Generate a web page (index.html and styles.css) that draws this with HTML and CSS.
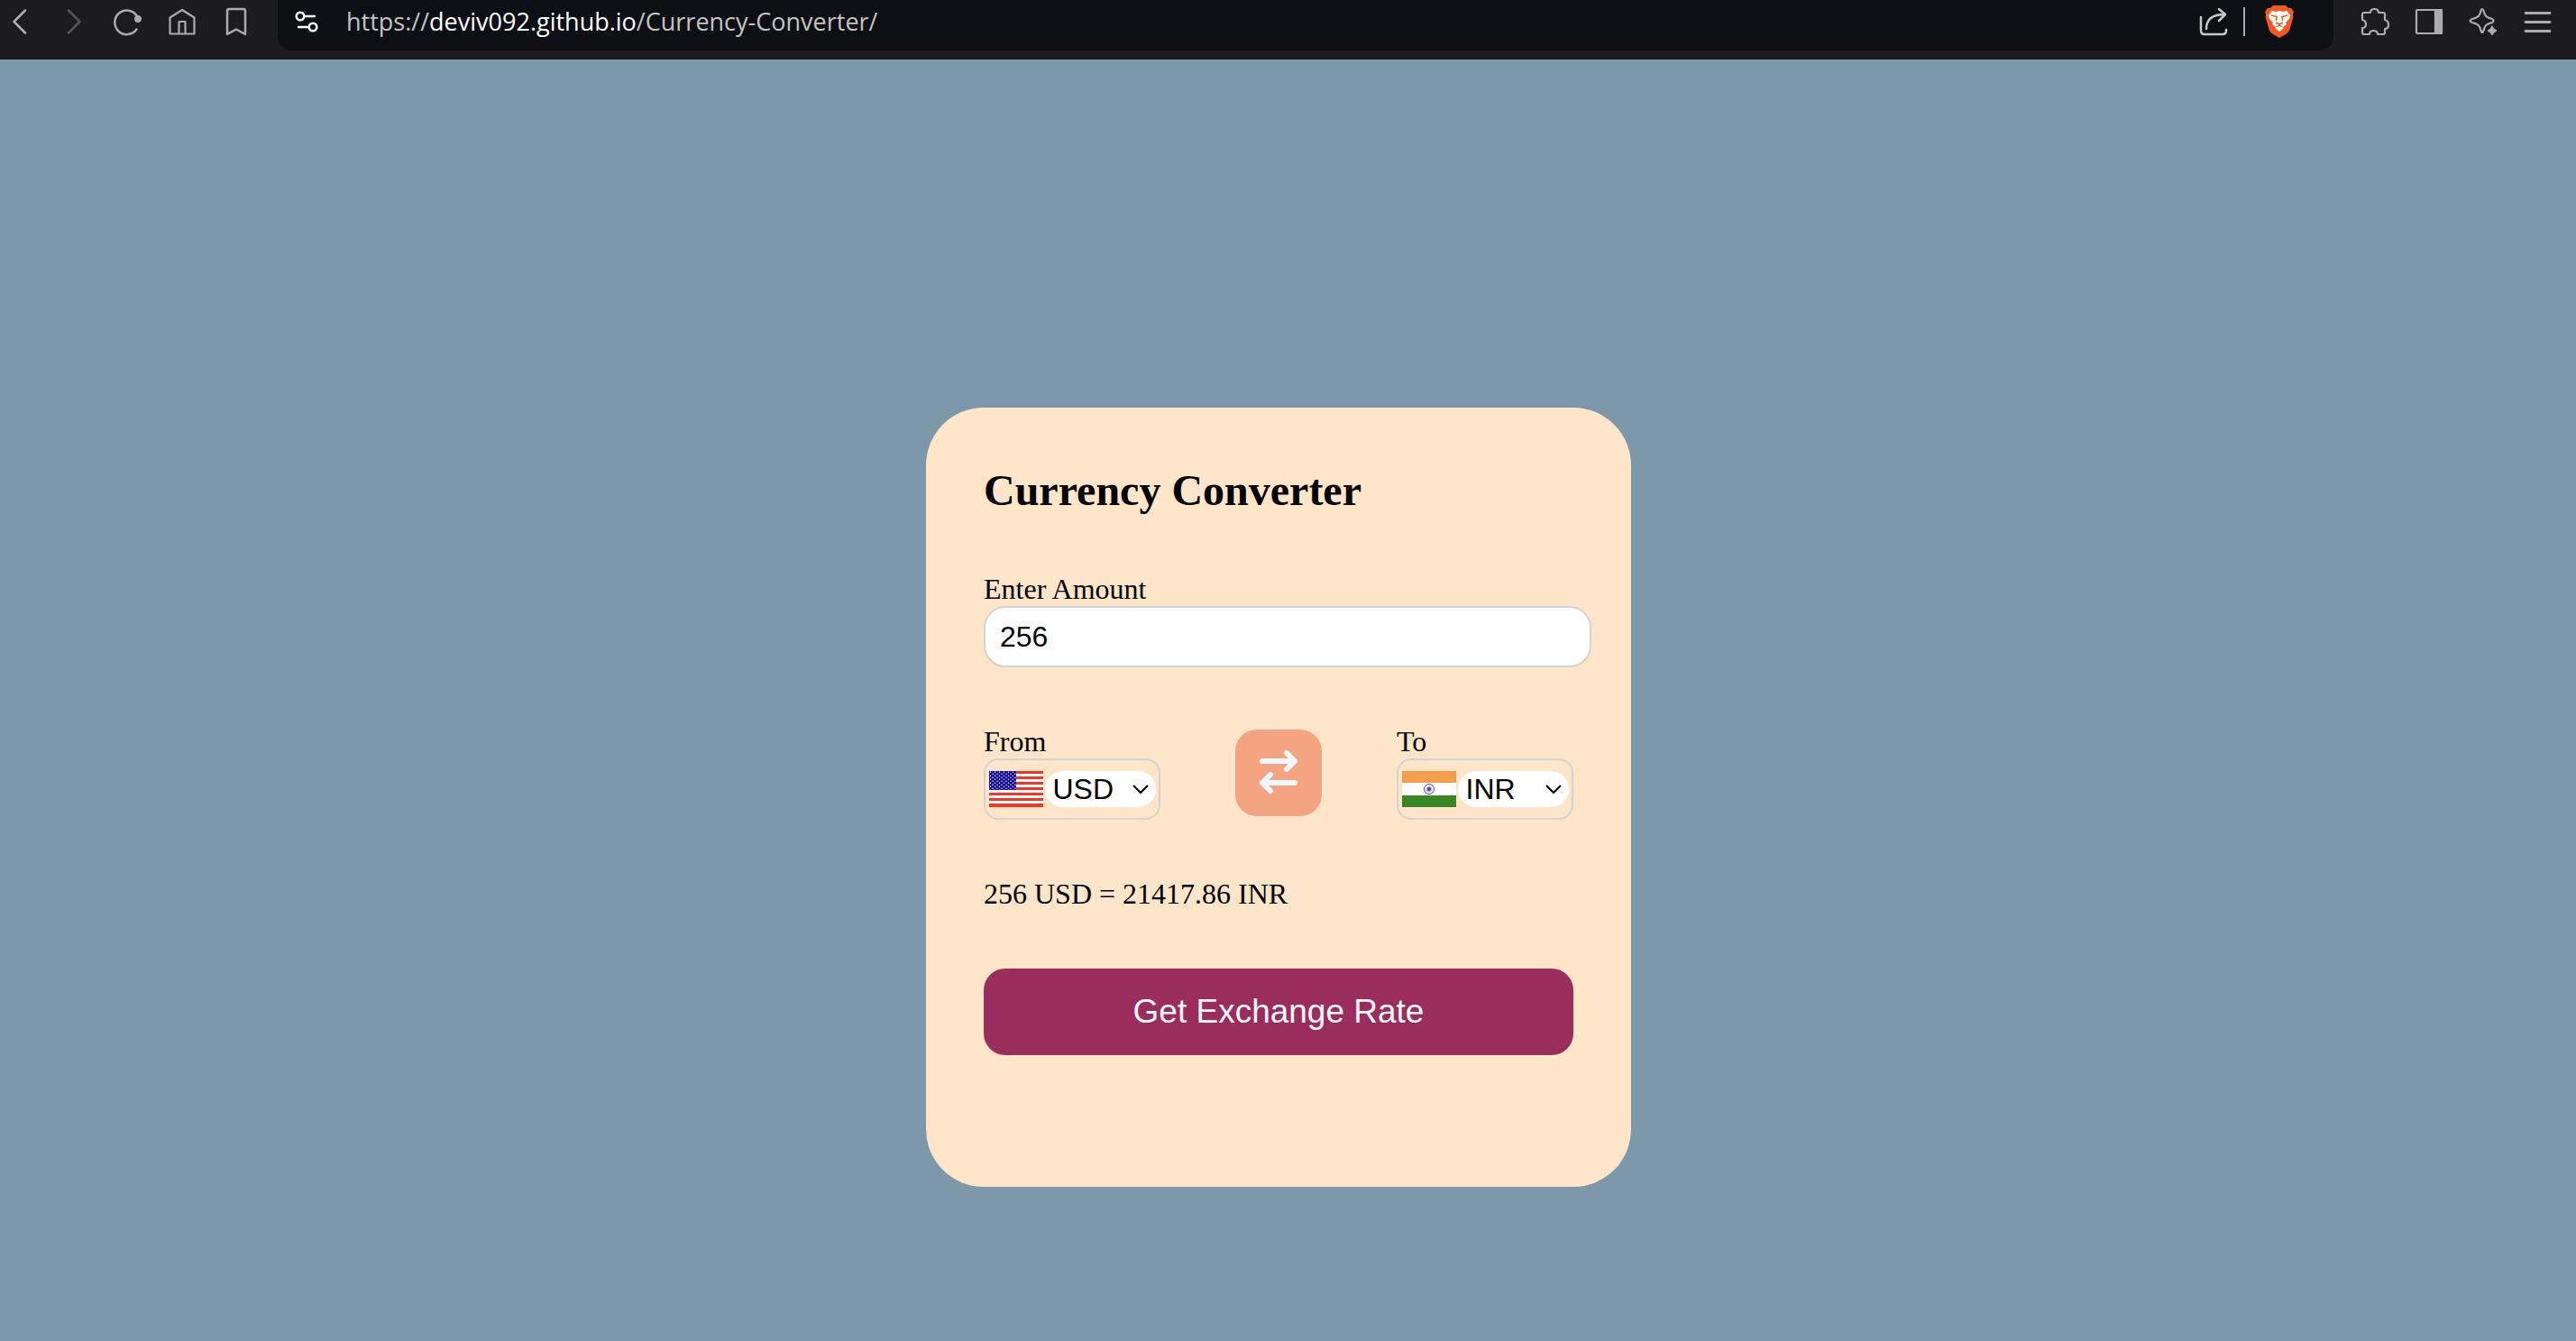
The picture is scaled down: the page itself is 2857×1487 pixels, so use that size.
FILE: index.html
```html
<!DOCTYPE html>
<html lang="en">
<head>
<meta charset="utf-8">
<title>Currency Converter</title>
<link rel="stylesheet" href="styles.css">
</head>
<body>
<header class="toolbar">
  <nav class="nav-buttons" aria-label="Navigation">
    <button class="icon-button" type="button" aria-label="Back"><svg viewBox="0 0 36 48" stroke-width="2.5"><path d="M24 11.500 11.500 24 24 36.500"/></svg></button>
    <button class="icon-button dim" type="button" aria-label="Forward"><svg viewBox="0 0 36 48" stroke-width="2.5"><path d="M12 11.500 24.500 24 12 36.500"/></svg></button>
    <button class="icon-button" type="button" aria-label="Reload"><svg viewBox="0 0 36 48" stroke-width="2.5"><path d="M27.500 32.500A13.300 13.300 0 1 1 29 20"/><circle class="solid" cx="29" cy="21" r="2.700"/></svg></button>
    <button class="icon-button" type="button" aria-label="Home"><svg viewBox="0 0 36 48" stroke-width="2.2"><path d="M4.500 19.500 18 11 31.500 19.500V37.500H4.500ZM14.500 37V24H21.500V37"/></svg></button>
    <button class="icon-button" type="button" aria-label="Bookmark"><svg viewBox="0 0 36 48" stroke-width="2.5"><path d="M10 10H26Q28 10 28 12V38L18 32.500 8 38V12Q8 10 10 10Z"/></svg></button>
  </nav>
  <div class="address">
    <svg class="site-icon" viewBox="0 0 28 28" stroke-width="2.5"><circle cx="7" cy="8" r="4.300"/><path d="M12 8H23M5 20H16"/><circle cx="21" cy="20" r="4.300"/></svg>
    <a class="url" href="https://deviv092.github.io/Currency-Converter/">https://<span class="host">deviv092.github.io</span>/Currency-Converter/</a>
    <button class="share" type="button" aria-label="Share"><svg viewBox="0 0 36 48" stroke-width="2.5"><path d="M4 19V34Q4 38 8 38H28Q32 38 32 34V33M10 32C10 21 17 16 30 16M24 10 31 16 24 23"/></svg></button>
    <span class="divider"></span>
    <button class="shields" type="button" aria-label="Shields"><svg viewBox="0 0 32 36"><path fill="#f05a22" d="M9 0H23L26 3 29 3 32 7 31 10 31.500 13 27 28Q26 30 23 32L16 36 9 32Q6 30 5 28L.5 13 1 10 0 7 3 3 6 3Z"/><path fill="#fff" d="M8 6 12 7 16 6 20 7 24 6 28 11 27 15 23 19 24 21 20 24 16 21 12 24 8 21 9 19 5 15 4 11ZM16 23 21 25 16 29 11 25Z"/><path stroke="#f05a22" stroke-width="1.600" fill="none" d="M7 11 13 12.500 12.500 17M25 11 19 12.500 19.500 17M12 19 16 21 20 19"/></svg></button>
  </div>
  <nav class="tool-buttons" aria-label="Tools">
    <button class="icon-button" type="button" aria-label="Extensions"><svg viewBox="0 0 36 48" stroke-width="2.2"><path d="M6 14H13Q13 10 17.500 10T22 14H27Q29 14 29 16V22Q33 23 33 27.500T29 32V36Q29 38 27 38H21Q21 34 16.500 34T12 38H6Q4 38 4 36V31Q8 31 8 27T4 22V16Q4 14 6 14Z"/></svg></button>
    <button class="icon-button" type="button" aria-label="Side panel"><svg viewBox="0 0 36 48" stroke-width="2.2"><rect x="4" y="11" width="28" height="26" rx="1"/><path class="solid" d="M25 11H32V37H25Z"/></svg></button>
    <button class="icon-button" type="button" aria-label="Assistant"><svg viewBox="0 0 36 48" stroke-width="2.2"><path d="M17 10Q18 10 18.500 12C20 18 21 19 28 21Q31 23 28 25C21 27 20 28 18.500 34Q17 38 15.500 34C14 28 13 27 6 25Q1 23 6 21C13 19 14 18 15.500 12Q16 10 17 10Z"/><path class="solid" stroke-width="1" d="M28 29 30 32 33 34 30 36 28 39 26 36 23 34 26 32Z"/></svg></button>
    <button class="icon-button" type="button" aria-label="Menu"><svg viewBox="0 0 36 48" stroke-width="2.8"><path d="M5 14.500H32M5 24.500H32M5 34.500H32"/></svg></button>
  </nav>
</header>
<main class="page">
  <form class="card">
    <h2 class="title">Currency Converter</h2>
    <div class="field">
      <label for="amount">Enter Amount</label>
      <input class="amount" id="amount" type="text" value="256">
    </div>
    <div class="dropdowns">
      <div class="field">
        <label for="from">From</label>
        <div class="picker">
          <svg class="flag" viewBox="0 0 60 40">
            <defs><pattern id="stars" width="5" height="4" patternUnits="userSpaceOnUse"><circle cx="1.500" cy="1.200" r=".7" fill="#fff"/><circle cx="4" cy="3.200" r=".7" fill="#fff"/></pattern></defs>
            <path fill="#fff" d="M0 0H60V40H0Z"/>
            <path stroke="#f53627" stroke-width="3" d="M0 1.500H60M0 7.500H60M0 13.500H60M0 19.500H60M0 25.500H60M0 31.500H60"/>
            <path stroke="#f53627" stroke-width="4" d="M0 38H60"/>
            <path fill="#15119b" d="M0 0H30V21H0Z"/><path fill="url(#stars)" d="M0 0H30V21H0Z"/>
          </svg>
          <select class="currency" id="from"><option>USD</option><option>INR</option></select>
        </div>
      </div>
      <button class="swap" type="button" aria-label="Swap currencies"><svg viewBox="0 0 96 96"><path d="M30 35H66M57 26 66 35 57 44M66 59H30M39 50 30 59 39 68"/></svg></button>
      <div class="field">
        <label for="to">To</label>
        <div class="picker">
          <svg class="flag" viewBox="0 0 60 40">
            <path fill="#fff" d="M0 0H60V40H0Z"/><path fill="#f59f4d" d="M0 0H60V13H0Z"/><path fill="#388624" d="M0 27H60V40H0Z"/>
            <circle cx="30" cy="20" r="5.500" fill="none" stroke="#4b46a8"/><circle cx="30" cy="20" r="3.500" fill="#b9b7dd"/><circle cx="30" cy="20" r="2" fill="#3f3a9f"/>
          </svg>
          <select class="currency" id="to"><option>INR</option><option>USD</option></select>
        </div>
      </div>
    </div>
    <p class="result">256 USD = 21417.86 INR</p>
    <button class="submit" type="submit">Get Exchange Rate</button>
  </form>
</main>
</body>
</html>
```
FILE: styles.css
```css
* { box-sizing: border-box; }
body {
  margin: 0;
  min-height: 100vh;
  display: flex;
  flex-direction: column;
  background: #7c98a9;
  font-family: "Liberation Serif", serif;
  font-size: 32px;
  line-height: 37px;
  color: #000;
}
button { border: 0; padding: 0; background: none; }
svg { display: block; }

.toolbar {
  display: flex;
  height: 66px;
  padding-right: 25px;
  background: #1c1b20;
}
.nav-buttons, .tool-buttons { display: flex; gap: 24px; }
.nav-buttons { padding-left: 4px; width: 308px; }
.tool-buttons { margin-left: 28px; }
.icon-button, .share { width: 36px; height: 48px; }
.icon-button svg, .share svg {
  width: 36px;
  height: 48px;
  fill: none;
  stroke: #adabb1;
  stroke-linecap: round;
  stroke-linejoin: round;
}
.icon-button .solid { fill: #adabb1; }
.dim { opacity: 0.4; }
.share svg { stroke: #c8c8c8; }

.address {
  flex: 1;
  display: flex;
  height: 56px;
  padding: 0 44px 8px 18px;
  align-items: center;
  background: #0e0f14;
  border-radius: 0 0 16px 16px;
}
.site-icon { width: 28px; height: 28px; fill: none; stroke: #fff; stroke-linecap: round; }
.url {
  flex: 1;
  margin-left: 30px;
  font: 27px/36px "Open Sans", sans-serif;
  color: #c4c4c5;
  text-decoration: none;
}
.host { color: #fff; }
.divider { width: 2px; height: 32px; margin: 0 22px 0 15px; background: #adabb1; }
.shields svg { width: 32px; height: 36px; }

.page {
  flex: 1;
  display: flex;
  align-items: center;
  justify-content: center;
  padding: 215px 21px 0 0;
}
.card {
  display: flex;
  flex-direction: column;
  gap: 64px;
  width: 782px;
  max-width: 100%;
  padding: 64px 64px 146px;
  background: #fde5c9;
  border-radius: 64px;
}
.title { margin: 0; font-size: 48px; line-height: 55px; }
.field { display: flex; flex-direction: column; }
.amount {
  width: calc(100% + 20px);
  height: 68px;
  padding: 0 16px;
  border: 2px solid #d3d3d3;
  border-radius: 24px;
  background: #fff;
  font: 32px "Liberation Sans", sans-serif;
}
.dropdowns { display: flex; align-items: center; justify-content: space-between; }
.picker {
  display: flex;
  align-items: center;
  justify-content: center;
  gap: 2px;
  width: 196px;
  height: 68px;
  border: 2px solid #d3d3d3;
  border-radius: 16px;
}
.flag { width: 60px; height: 40px; }
.currency {
  appearance: none;
  width: 123px;
  height: 40px;
  padding: 0 9px;
  border: 0;
  border-radius: 20px;
  background: #fff url("data:image/svg+xml,%3Csvg xmlns='http://www.w3.org/2000/svg' width='18' height='12'%3E%3Cpath d='M1 2 9 10 17 2' fill='none' stroke='black' stroke-width='2'/%3E%3C/svg%3E") no-repeat right 8px center;
  font: 32px "Liberation Sans", sans-serif;
  color: #000;
}
.swap { border-radius: 24px; background: #f5a481; }
.swap svg { width: 96px; height: 96px; fill: none; stroke: #f0f8ff; stroke-width: 6; stroke-linecap: round; stroke-linejoin: round; }
.result { margin: 0; }
.submit {
  height: 96px;
  border-radius: 24px;
  background: #9b2d5c;
  color: #f0f8ff;
  font: 37px "Liberation Sans", sans-serif;
}
```
